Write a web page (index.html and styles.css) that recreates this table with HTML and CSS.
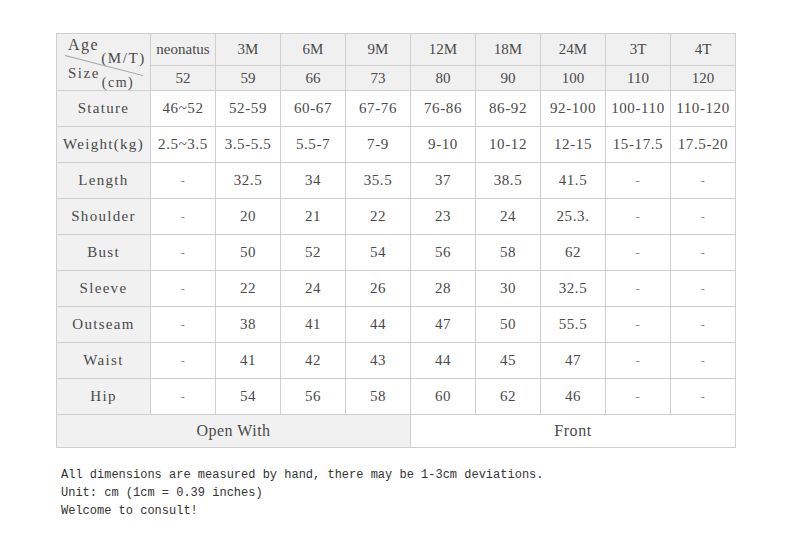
FILE: index.html
```html
<!DOCTYPE html>
<html>
<head>
<meta charset="utf-8">
<link rel="stylesheet" href="styles.css">
</head>
<body>
<div class="page">
  <table class="size-table">
    <colgroup>
      <col class="c-label">
      <col class="c-val"><col class="c-val"><col class="c-val"><col class="c-val"><col class="c-val"><col class="c-val"><col class="c-val"><col class="c-val"><col class="c-val">
    </colgroup>
    <tr class="head1">
      <th class="diag" rowspan="2">
        <div class="diag-box">
          <span class="diag-line"></span>
          <div class="d-age">Age<span class="d-sub">(M/T)</span></div>
          <div class="d-size">Size<span class="d-sub2">(cm)</span></div>
        </div>
      </th>
      <th>neonatus</th><th>3M</th><th>6M</th><th>9M</th><th>12M</th><th>18M</th><th>24M</th><th>3T</th><th>4T</th>
    </tr>
    <tr class="head2">
      <th>52</th><th>59</th><th>66</th><th>73</th><th>80</th><th>90</th><th>100</th><th>110</th><th>120</th>
    </tr>
    <tr class="row">
      <th class="lbl">Stature</th><td>46~52</td><td>52-59</td><td>60-67</td><td>67-76</td><td>76-86</td><td>86-92</td><td>92-100</td><td>100-110</td><td>110-120</td>
    </tr>
    <tr class="row">
      <th class="lbl">Weight(kg)</th><td>2.5~3.5</td><td>3.5-5.5</td><td>5.5-7</td><td>7-9</td><td>9-10</td><td>10-12</td><td>12-15</td><td>15-17.5</td><td>17.5-20</td>
    </tr>
    <tr class="row">
      <th class="lbl">Length</th><td class="dash">-</td><td>32.5</td><td>34</td><td>35.5</td><td>37</td><td>38.5</td><td>41.5</td><td class="dash">-</td><td class="dash">-</td>
    </tr>
    <tr class="row">
      <th class="lbl">Shoulder</th><td class="dash">-</td><td>20</td><td>21</td><td>22</td><td>23</td><td>24</td><td>25.3.</td><td class="dash">-</td><td class="dash">-</td>
    </tr>
    <tr class="row">
      <th class="lbl">Bust</th><td class="dash">-</td><td>50</td><td>52</td><td>54</td><td>56</td><td>58</td><td>62</td><td class="dash">-</td><td class="dash">-</td>
    </tr>
    <tr class="row">
      <th class="lbl">Sleeve</th><td class="dash">-</td><td>22</td><td>24</td><td>26</td><td>28</td><td>30</td><td>32.5</td><td class="dash">-</td><td class="dash">-</td>
    </tr>
    <tr class="row">
      <th class="lbl">Outseam</th><td class="dash">-</td><td>38</td><td>41</td><td>44</td><td>47</td><td>50</td><td>55.5</td><td class="dash">-</td><td class="dash">-</td>
    </tr>
    <tr class="row">
      <th class="lbl">Waist</th><td class="dash">-</td><td>41</td><td>42</td><td>43</td><td>44</td><td>45</td><td>47</td><td class="dash">-</td><td class="dash">-</td>
    </tr>
    <tr class="row">
      <th class="lbl">Hip</th><td class="dash">-</td><td>54</td><td>56</td><td>58</td><td>60</td><td>62</td><td>46</td><td class="dash">-</td><td class="dash">-</td>
    </tr>
    <tr class="foot">
      <th class="open" colspan="5">Open With</th>
      <td class="front" colspan="5">Front</td>
    </tr>
  </table>
  <div class="notes">
    <div>All dimensions are measured by hand, there may be 1-3cm deviations.</div>
    <div>Unit: cm (1cm = 0.39 inches)</div>
    <div>Welcome to consult!</div>
  </div>
</div>
</body>
</html>
```
FILE: styles.css
```css
html, body {
  margin: 0;
  padding: 0;
  background: #ffffff;
}
.page {
  padding: 33px 0 0 56px;
}
.size-table {
  border-collapse: collapse;
  table-layout: fixed;
  width: 679px;
  font-family: "Liberation Serif", "DejaVu Serif", serif;
  font-size: 15px;
  color: #4a4a4a;
}
.c-label { width: 94px; }
.c-val { width: 65px; }
.size-table th,
.size-table td {
  border: 1px solid #cfcfcf;
  text-align: center;
  vertical-align: middle;
  padding: 0;
  font-weight: normal;
  white-space: nowrap;
}
.head1 { height: 32px; }
.head2 { height: 25px; }
.head1 th, .head2 th {
  background: #f0f0f0;
}
.row { height: 36px; }
.row td { background: #ffffff; letter-spacing: 0.6px; }
.row td.dash { color: #8a8a8a; font-size: 13px; }
.lbl {
  background: #f1f1f1;
  letter-spacing: 1.3px;
}
.foot { height: 33px; }
.open {
  background: #f1f1f1;
  font-size: 16px;
  letter-spacing: 0.5px;
}
.front {
  background: #ffffff;
  font-size: 16px;
  letter-spacing: 0.6px;
}
.diag {
  background: #f0f0f0;
  text-align: left !important;
}
.diag-box {
  position: relative;
  height: 55px;
  padding-left: 11px;
  box-sizing: border-box;
  letter-spacing: 1.5px;
  color: #4a4a4a;
}
.diag-line {
  position: absolute;
  left: 8px;
  top: 20px;
  width: 81px;
  height: 1px;
  background: #a0a0a0;
  transform-origin: 0 0;
  transform: rotate(14.4deg);
}
.d-age {
  font-size: 16px;
  line-height: 20px;
}
.d-sub {
  font-size: 15px;
  line-height: 0;
  vertical-align: -13px;
  margin-left: 2px;
  letter-spacing: 1.6px;
}
.d-size {
  font-size: 15px;
  line-height: 20px;
  margin-top: 5px;
}
.d-sub2 {
  font-size: 14px;
  line-height: 0;
  vertical-align: -9px;
  margin-left: 2px;
}
.notes {
  margin-top: 18px;
  padding-left: 5px;
  font-family: "Liberation Mono", "DejaVu Sans Mono", monospace;
  font-size: 12px;
  line-height: 18px;
  color: #333333;
}
```
